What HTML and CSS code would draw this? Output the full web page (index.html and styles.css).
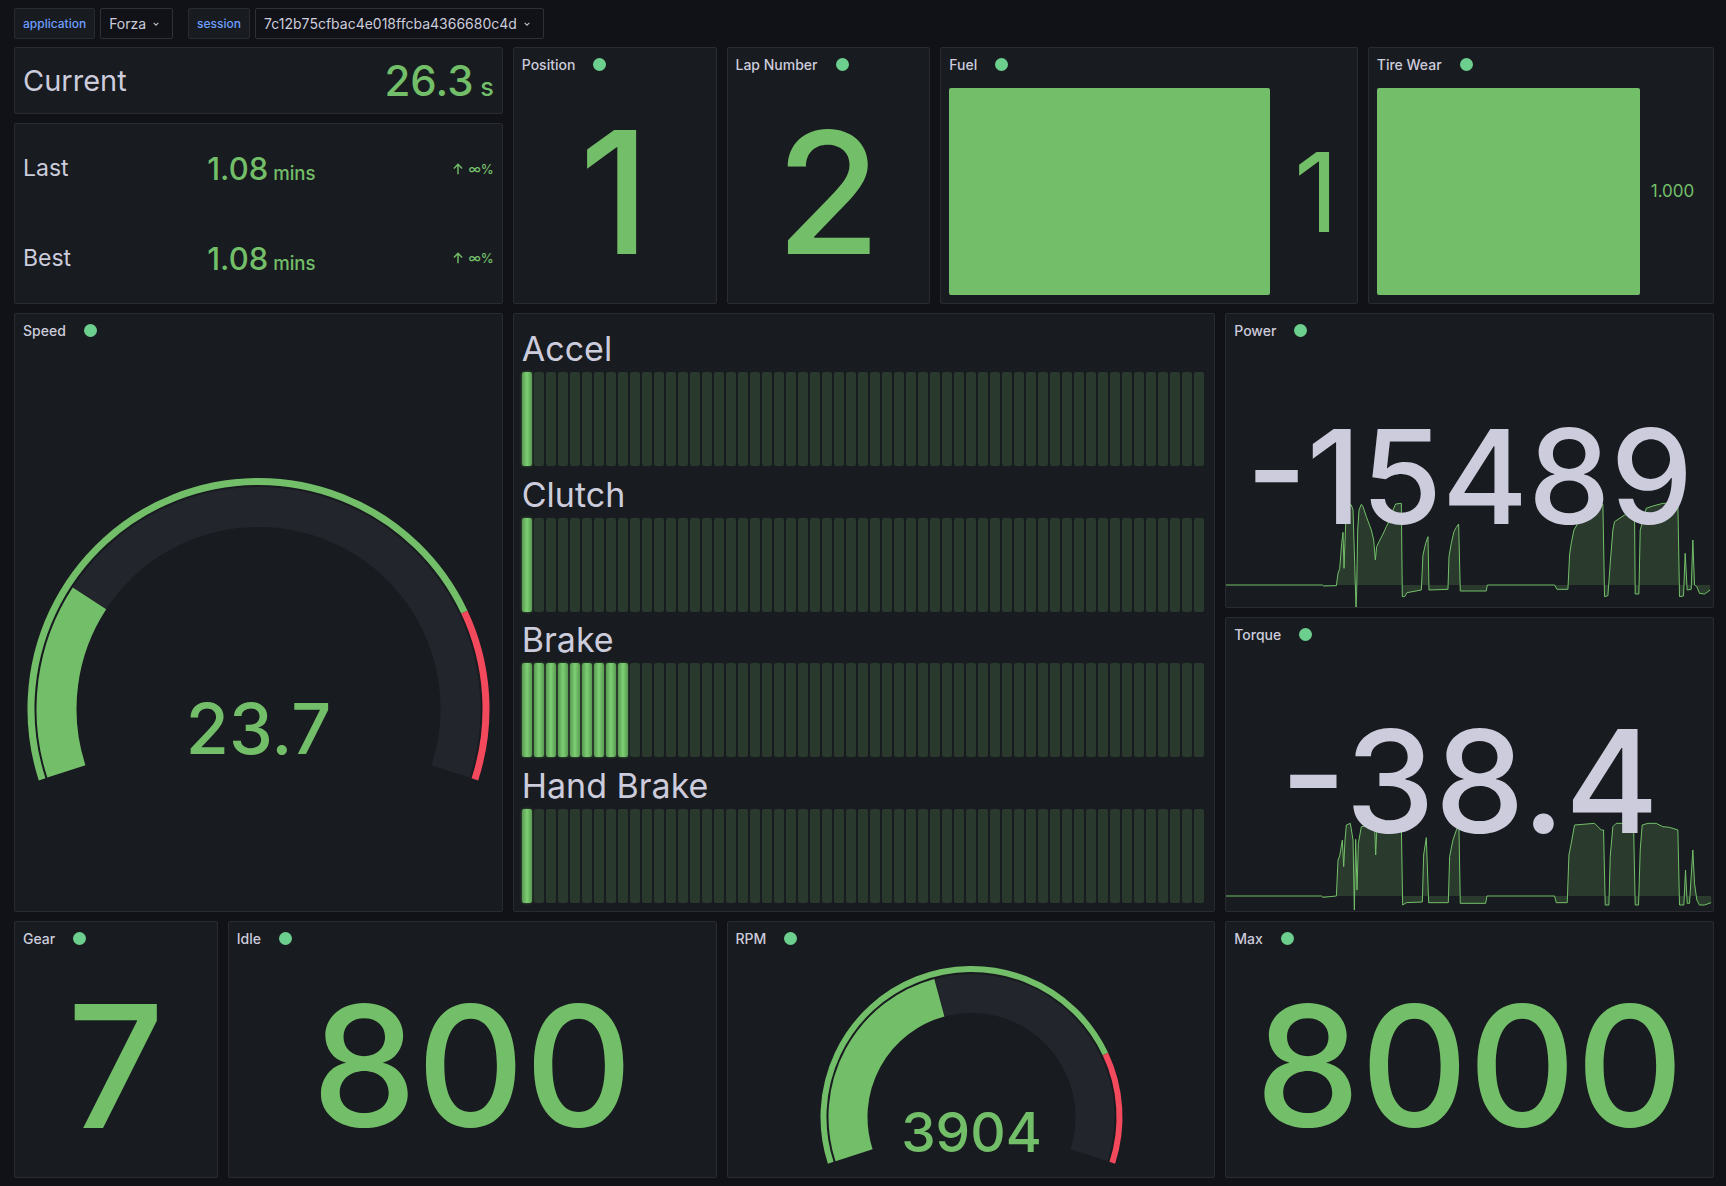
FILE: index.html
```html
<!DOCTYPE html>
<html lang="en">
<head>
<meta charset="utf-8">
<title>Forza Dashboard</title>
<link rel="stylesheet" href="styles.css">
</head>
<body>
<div class="vars">
  <div class="var">
    <span class="var-label">application</span>
    <span class="var-select">Forza<svg class="chev" viewBox="0 0 24 24"><path d="M8 10l4 4 4-4"/></svg></span>
  </div>
  <div class="var">
    <span class="var-label">session</span>
    <span class="var-select">7c12b75cfbac4e018ffcba4366680c4d<svg class="chev" viewBox="0 0 24 24"><path d="M8 10l4 4 4-4"/></svg></span>
  </div>
</div>

<main class="grid">
  <section class="panel p-current">
    <div class="row-stat">
      <span class="stat-name n29">Current</span>
      <span class="stat-val v42">26.3<span class="unit"> s</span></span>
    </div>
  </section>

  <section class="panel p-lastbest">
    <div class="lb-row">
      <span class="stat-name n23">Last</span>
      <span class="stat-val v31 nudge">1.08<span class="unit"> mins</span></span>
      <span class="trend"><svg class="arrow" viewBox="0 0 24 24"><path d="M12 21V4M5 11l7-7 7 7"/></svg>∞%</span>
    </div>
    <div class="lb-row">
      <span class="stat-name n23">Best</span>
      <span class="stat-val v31 nudge">1.08<span class="unit"> mins</span></span>
      <span class="trend"><svg class="arrow" viewBox="0 0 24 24"><path d="M12 21V4M5 11l7-7 7 7"/></svg>∞%</span>
    </div>
  </section>

  <section class="panel p-position">
    <header class="ph">Position<span class="dot"></span></header>
    <div class="pb"><span class="big v170">1</span></div>
  </section>

  <section class="panel p-lap">
    <header class="ph">Lap Number<span class="dot"></span></header>
    <div class="pb"><span class="big v170">2</span></div>
  </section>

  <section class="panel p-fuel">
    <header class="ph">Fuel<span class="dot"></span></header>
    <div class="pb bar-body">
      <div class="bar-fill"></div>
      <div class="bar-val w79 shift"><span class="bv v110">1</span></div>
    </div>
  </section>

  <section class="panel p-tire">
    <header class="ph">Tire Wear<span class="dot"></span></header>
    <div class="pb bar-body">
      <div class="bar-fill"></div>
      <div class="bar-val w65"><span class="bv v17">1.000</span></div>
    </div>
  </section>

  <section class="panel p-speed">
    <header class="ph">Speed<span class="dot"></span></header>
    <div class="pb-gauge">
      <svg class="gauge g-speed" viewBox="0 0 487 565">
        <path class="g-thr" d="M27.13 433.30 A227.5 227.5 0 0 1 449.35 266.13"/>
        <path class="g-thr red" d="M449.35 266.13 A227.5 227.5 0 0 1 459.87 433.30"/>
        <path class="g-track w40" d="M51.39 425.42 A202 202 0 1 1 435.61 425.42"/>
        <path class="g-fill w40" d="M51.39 425.42 A202 202 0 0 1 74.46 252.41"/>
        <text class="g-text" x="243.5" y="408" font-size="70">23.7</text>
      </svg>
    </div>
  </section>

  <section class="panel p-pedals">
    <div class="pedal">
      <div class="pedal-name">Accel</div>
      <div class="lcd"><i class="on"></i><i></i><i></i><i></i><i></i><i></i><i></i><i></i><i></i><i></i><i></i><i></i><i></i><i></i><i></i><i></i><i></i><i></i><i></i><i></i><i></i><i></i><i></i><i></i><i></i><i></i><i></i><i></i><i></i><i></i><i></i><i></i><i></i><i></i><i></i><i></i><i></i><i></i><i></i><i></i><i></i><i></i><i></i><i></i><i></i><i></i><i></i><i></i><i></i><i></i><i></i><i></i><i></i><i></i><i></i><i></i><i></i></div>
    </div>
    <div class="pedal">
      <div class="pedal-name">Clutch</div>
      <div class="lcd"><i class="on"></i><i></i><i></i><i></i><i></i><i></i><i></i><i></i><i></i><i></i><i></i><i></i><i></i><i></i><i></i><i></i><i></i><i></i><i></i><i></i><i></i><i></i><i></i><i></i><i></i><i></i><i></i><i></i><i></i><i></i><i></i><i></i><i></i><i></i><i></i><i></i><i></i><i></i><i></i><i></i><i></i><i></i><i></i><i></i><i></i><i></i><i></i><i></i><i></i><i></i><i></i><i></i><i></i><i></i><i></i><i></i><i></i></div>
    </div>
    <div class="pedal">
      <div class="pedal-name">Brake</div>
      <div class="lcd"><i class="on"></i><i class="on"></i><i class="on"></i><i class="on"></i><i class="on"></i><i class="on"></i><i class="on"></i><i class="on"></i><i class="on"></i><i></i><i></i><i></i><i></i><i></i><i></i><i></i><i></i><i></i><i></i><i></i><i></i><i></i><i></i><i></i><i></i><i></i><i></i><i></i><i></i><i></i><i></i><i></i><i></i><i></i><i></i><i></i><i></i><i></i><i></i><i></i><i></i><i></i><i></i><i></i><i></i><i></i><i></i><i></i><i></i><i></i><i></i><i></i><i></i><i></i><i></i><i></i><i></i></div>
    </div>
    <div class="pedal">
      <div class="pedal-name">Hand Brake</div>
      <div class="lcd"><i class="on"></i><i></i><i></i><i></i><i></i><i></i><i></i><i></i><i></i><i></i><i></i><i></i><i></i><i></i><i></i><i></i><i></i><i></i><i></i><i></i><i></i><i></i><i></i><i></i><i></i><i></i><i></i><i></i><i></i><i></i><i></i><i></i><i></i><i></i><i></i><i></i><i></i><i></i><i></i><i></i><i></i><i></i><i></i><i></i><i></i><i></i><i></i><i></i><i></i><i></i><i></i><i></i><i></i><i></i><i></i><i></i><i></i></div>
    </div>
  </section>

  <section class="panel p-power">
    <svg class="spark" viewBox="18.75 12 1461 879" preserveAspectRatio="none">
      <path class="spark-fill" d="M17 825 L308 825 L312 828 L350 827 L355 790 L360 776 L366 700 L370 667 L373 775 L378 640 L383 580 L395 585 L400 600 L405 760 L409 893 L411 845 L414 660 L418 600 L425 583 L430 590 L440 620 L455 660 L462 690 L467 750 L471 710 L478 695 L490 672 L500 650 L510 630 L520 600 L528 582 L545 580 L548 860 L555 860 L562 848 L605 840 L610 735 L618 700 L625 680 L628 840 L685 838 L688 740 L695 700 L703 665 L710 652 L717 642 L722 843 L800 843 L803 825 L1005 825 L1012 838 L1045 838 L1050 735 L1055 700 L1063 660 L1075 640 L1100 625 L1125 600 L1150 583 L1155 860 L1165 857 L1172 760 L1180 660 L1185 635 L1215 615 L1245 610 L1247 852 L1258 852 L1262 660 L1268 640 L1280 595 L1300 588 L1330 580 L1375 580 L1380 860 L1392 858 L1397 730 L1403 840 L1415 838 L1420 690 L1425 825 L1432 830 L1440 850 L1455 852 L1472 840 L1472 825 Z"/>
      <path class="spark-line" d="M17 825 L308 825 L312 828 L350 827 L355 790 L360 776 L366 700 L370 667 L373 775 L378 640 L383 580 L395 585 L400 600 L405 760 L409 893 L411 845 L414 660 L418 600 L425 583 L430 590 L440 620 L455 660 L462 690 L467 750 L471 710 L478 695 L490 672 L500 650 L510 630 L520 600 L528 582 L545 580 L548 860 L555 860 L562 848 L605 840 L610 735 L618 700 L625 680 L628 840 L685 838 L688 740 L695 700 L703 665 L710 652 L717 642 L722 843 L800 843 L803 825 L1005 825 L1012 838 L1045 838 L1050 735 L1055 700 L1063 660 L1075 640 L1100 625 L1125 600 L1150 583 L1155 860 L1165 857 L1172 760 L1180 660 L1185 635 L1215 615 L1245 610 L1247 852 L1258 852 L1262 660 L1268 640 L1280 595 L1300 588 L1330 580 L1375 580 L1380 860 L1392 858 L1397 730 L1403 840 L1415 838 L1420 690 L1425 825 L1432 830 L1440 850 L1455 852 L1472 840"/>
    </svg>
    <header class="ph">Power<span class="dot"></span></header>
    <div class="pb"><span class="big grey v131">-15489</span></div>
  </section>

  <section class="panel p-torque">
    <svg class="spark" viewBox="18.75 24 1461 879" preserveAspectRatio="none">
      <path class="spark-fill" d="M17 858 L305 858 L310 862 L350 858 L355 750 L360 738 L368 690 L372 770 L376 690 L380 645 L392 640 L400 690 L404 900 L408 688 L412 840 L416 700 L425 650 L465 645 L468 735 L472 645 L545 645 L549 885 L560 878 L608 876 L612 735 L620 683 L627 878 L686 878 L690 740 L700 690 L712 655 L718 655 L722 880 L798 880 L802 858 L1005 858 L1010 878 L1043 878 L1048 735 L1055 700 L1065 645 L1125 640 L1145 660 L1152 660 L1157 885 L1168 885 L1172 740 L1180 650 L1190 640 L1242 640 L1247 885 L1257 885 L1262 720 L1268 645 L1285 640 L1310 640 L1330 650 L1350 652 L1375 660 L1380 885 L1393 885 L1398 780 L1403 880 L1410 880 L1420 720 L1425 820 L1432 870 L1440 885 L1455 885 L1475 878 L1475 858 Z"/>
      <path class="spark-line" d="M17 858 L305 858 L310 862 L350 858 L355 750 L360 738 L368 690 L372 770 L376 690 L380 645 L392 640 L400 690 L404 900 L408 688 L412 840 L416 700 L425 650 L465 645 L468 735 L472 645 L545 645 L549 885 L560 878 L608 876 L612 735 L620 683 L627 878 L686 878 L690 740 L700 690 L712 655 L718 655 L722 880 L798 880 L802 858 L1005 858 L1010 878 L1043 878 L1048 735 L1055 700 L1065 645 L1125 640 L1145 660 L1152 660 L1157 885 L1168 885 L1172 740 L1180 650 L1190 640 L1242 640 L1247 885 L1257 885 L1262 720 L1268 645 L1285 640 L1310 640 L1330 650 L1350 652 L1375 660 L1380 885 L1393 885 L1398 780 L1403 880 L1410 880 L1420 720 L1425 820 L1432 870 L1440 885 L1455 885 L1475 878"/>
    </svg>
    <header class="ph">Torque<span class="dot"></span></header>
    <div class="pb"><span class="big grey v143">-38.4</span></div>
  </section>

  <section class="panel p-gear">
    <header class="ph">Gear<span class="dot"></span></header>
    <div class="pb"><span class="big v170">7</span></div>
  </section>

  <section class="panel p-idle">
    <header class="ph">Idle<span class="dot"></span></header>
    <div class="pb"><span class="big v167">800</span></div>
  </section>

  <section class="panel p-rpm">
    <header class="ph">RPM<span class="dot"></span></header>
    <div class="pb-gauge">
      <svg class="gauge g-rpm" viewBox="0 0 487 223">
        <path class="g-thr w6" d="M102.74 208.73 A148 148 0 0 1 377.41 99.98"/>
        <path class="g-thr w6 red" d="M377.41 99.98 A148 148 0 0 1 384.26 208.73"/>
        <path class="g-track w39" d="M126.04 201.16 A123.5 123.5 0 1 1 360.96 201.16"/>
        <path class="g-fill w39" d="M126.04 201.16 A123.5 123.5 0 0 1 211.33 43.76"/>
        <text class="g-text" x="243.5" y="198" font-size="55">3904</text>
      </svg>
    </div>
  </section>

  <section class="panel p-max">
    <header class="ph">Max<span class="dot"></span></header>
    <div class="pb"><span class="big v167">8000</span></div>
  </section>
</main>
</body>
</html>
```

FILE: styles.css
```css
html, body {
  margin: 0;
  height: 1186px;
  overflow: hidden;
}
body {
  box-sizing: border-box;
  padding: 8px 12px 0 14px;
  background: #111217;
  color: #ccccdc;
  font-family: "Inter", "Noto Sans", sans-serif;
}

/* variables bar */
.vars {
  display: flex;
  gap: 15px;
  height: 31px;
  margin-bottom: 8px;
}
.var {
  display: flex;
  gap: 5px;
}
.var-label {
  display: flex;
  align-items: center;
  padding: 0 8px;
  background: #181b1f;
  border: 1px solid #2a2b31;
  border-radius: 2px;
  color: #6e9fff;
  font-size: 12px;
  font-weight: 500;
}
.var-select {
  display: flex;
  align-items: center;
  gap: 3px;
  padding: 0 9px 0 8px;
  background: #111217;
  border: 1px solid #2f3036;
  border-radius: 2px;
  font-size: 14px;
  color: #ccccdc;
}
.chev {
  width: 14px;
  height: 14px;
  fill: none;
  stroke: #b8bcc8;
  stroke-width: 2;
}

/* grid */
.grid {
  display: grid;
  grid-template-columns: repeat(24, 1fr);
  grid-template-rows: repeat(30, 29px);
  column-gap: 10px;
  row-gap: 9px;
}
.panel {
  box-sizing: border-box;
  position: relative;
  background: #181b1f;
  border: 1px solid #2a2b31;
  border-radius: 2px;
  display: flex;
  flex-direction: column;
  overflow: hidden;
  min-width: 0;
  min-height: 0;
}
.p-current  { grid-column: 1 / 8;   grid-row: 1 / 3; }
.p-lastbest { grid-column: 1 / 8;   grid-row: 3 / 8; }
.p-position { grid-column: 8 / 11;  grid-row: 1 / 8; }
.p-lap      { grid-column: 11 / 14; grid-row: 1 / 8; }
.p-fuel     { grid-column: 14 / 20; grid-row: 1 / 8; }
.p-tire     { grid-column: 20 / 25; grid-row: 1 / 8; }
.p-speed    { grid-column: 1 / 8;   grid-row: 8 / 24; }
.p-pedals   { grid-column: 8 / 18;  grid-row: 8 / 24; }
.p-power    { grid-column: 18 / 25; grid-row: 8 / 16; }
.p-torque   { grid-column: 18 / 25; grid-row: 16 / 24; }
.p-gear     { grid-column: 1 / 4;   grid-row: 24 / 31; }
.p-idle     { grid-column: 4 / 11;  grid-row: 24 / 31; }
.p-rpm      { grid-column: 11 / 18; grid-row: 24 / 31; }
.p-max      { grid-column: 18 / 25; grid-row: 24 / 31; }

.ph {
  position: relative;
  z-index: 1;
  flex: none;
  height: 32px;
  display: flex;
  align-items: center;
  padding: 0 8px;
  font-size: 14px;
  font-weight: 500;
  color: #ccccdc;
  white-space: nowrap;
}
.dot {
  width: 13px;
  height: 13px;
  border-radius: 50%;
  background: #6ccf8e;
  margin-left: 18px;
}
.pb {
  position: relative;
  z-index: 1;
  flex: 1;
  min-height: 0;
  display: flex;
  align-items: center;
  justify-content: center;
}
.big {
  line-height: 1;
  font-weight: 500;
  color: #73bf69;
  white-space: nowrap;
}
.big.grey { color: #ccccdc; }
.v170 { font-size: 170px; }
.v167 { font-size: 167px; }
.v143 { font-size: 143px; }
.v131 { font-size: 131px; }
.v110 { font-size: 110px; }
.v17  { font-size: 17px; }

/* stat rows */
.row-stat {
  flex: 1;
  display: flex;
  align-items: center;
  justify-content: space-between;
  padding: 0 8px;
}
.stat-name { color: #ccccdc; line-height: 1; }
.n29 { font-size: 29px; }
.n23 { font-size: 23px; }
.stat-val {
  color: #73bf69;
  font-weight: 500;
  line-height: 1;
  white-space: nowrap;
}
.stat-val.nudge { margin-left: 6px; }
.v42 { font-size: 42px; }
.v31 { font-size: 31px; }
.unit { font-size: 0.6em; }
.lb-row {
  flex: 1;
  display: grid;
  grid-template-columns: 1fr auto 1fr;
  align-items: center;
  padding: 0 8px;
}
.trend {
  justify-self: end;
  display: flex;
  align-items: center;
  gap: 3px;
  color: #73bf69;
  font-size: 13px;
  font-weight: 500;
}
.arrow {
  width: 14px;
  height: 14px;
  fill: none;
  stroke: #73bf69;
  stroke-width: 2.4;
}

/* bar gauges */
.bar-body {
  align-items: stretch;
  justify-content: flex-start;
  padding: 8px;
}
.bar-fill {
  flex: 1;
  background: #73bf69;
  border-radius: 2px;
}
.bar-val {
  flex: none;
  display: flex;
  align-items: center;
  justify-content: center;
}
.bar-val.shift { padding-left: 14px; box-sizing: border-box; }
.w79 { width: 79px; }
.w65 { width: 65px; }
.bv {
  color: #73bf69;
  line-height: 1;
  font-weight: 400;
}

/* gauges */
.pb-gauge {
  flex: 1;
  min-height: 0;
}
.gauge { display: block; }
.g-speed { width: 487px; height: 565px; }
.g-rpm { width: 487px; height: 223px; }
.gauge path { fill: none; }
.g-thr { stroke: #73bf69; stroke-width: 7; }
.g-thr.w6 { stroke-width: 6; }
.g-thr.red { stroke: #f2495c; }
.g-track { stroke: #22252b; }
.g-fill { stroke: #73bf69; }
.w40 { stroke-width: 40; }
.w39 { stroke-width: 39; }
.g-text {
  fill: #73bf69;
  font-family: "Inter", "Noto Sans", sans-serif;
  font-weight: 500;
  text-anchor: middle;
}

/* pedals (LCD bar gauges) */
.p-pedals {
  padding: 8px;
  justify-content: space-between;
}
.pedal {
  display: flex;
  flex-direction: column;
}
.pedal-name {
  box-sizing: border-box;
  height: 50px;
  padding-top: 2px;
  line-height: 50px;
  font-size: 34px;
  color: #ccccdc;
  white-space: nowrap;
  overflow: hidden;
}
.lcd {
  display: flex;
  gap: 2px;
  height: 94px;
}
.lcd i {
  flex: none;
  width: 10px;
  height: 100%;
  border-radius: 2px;
  background: #29392d;
}
.lcd i.on {
  background: linear-gradient(90deg, #5a9a52 0%, #7dcf73 50%, #5a9a52 100%);
  box-shadow: 0 0 3px rgba(115, 191, 105, 0.45);
}

/* sparklines */
.spark {
  position: absolute;
  inset: 0;
  width: 100%;
  height: 100%;
  z-index: 0;
}
.spark-fill {
  fill: rgba(115, 191, 105, 0.2);
  stroke: none;
}
.spark-line {
  fill: none;
  stroke: #73bf69;
  stroke-width: 1;
  vector-effect: non-scaling-stroke;
}
```
